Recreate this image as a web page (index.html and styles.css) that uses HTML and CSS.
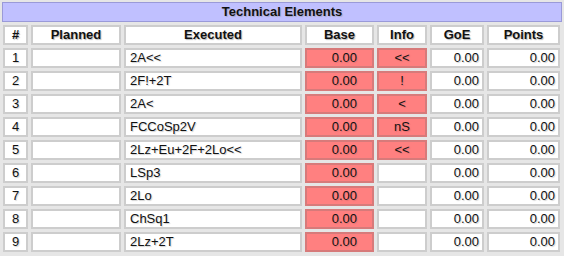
FILE: index.html
```html
<!DOCTYPE html>
<html>
<head>
<meta charset="utf-8">
<link rel="stylesheet" href="styles.css">
</head>
<body>
<div class="panel">
  <div class="title">Technical Elements</div>
  <div class="grid">
    <div class="cell head">#</div>
    <div class="cell head">Planned</div>
    <div class="cell head">Executed</div>
    <div class="cell head">Base</div>
    <div class="cell head">Info</div>
    <div class="cell head">GoE</div>
    <div class="cell head">Points</div>

    <div class="cell c">1</div><div class="cell"></div><div class="cell l">2A&lt;&lt;</div><div class="cell base red">0.00</div><div class="cell c red">&lt;&lt;</div><div class="cell r">0.00</div><div class="cell r">0.00</div>
    <div class="cell c">2</div><div class="cell"></div><div class="cell l">2F!+2T</div><div class="cell base red">0.00</div><div class="cell c red">!</div><div class="cell r">0.00</div><div class="cell r">0.00</div>
    <div class="cell c">3</div><div class="cell"></div><div class="cell l">2A&lt;</div><div class="cell base red">0.00</div><div class="cell c red">&lt;</div><div class="cell r">0.00</div><div class="cell r">0.00</div>
    <div class="cell c">4</div><div class="cell"></div><div class="cell l">FCCoSp2V</div><div class="cell base red">0.00</div><div class="cell c red">nS</div><div class="cell r">0.00</div><div class="cell r">0.00</div>
    <div class="cell c">5</div><div class="cell"></div><div class="cell l">2Lz+Eu+2F+2Lo&lt;&lt;</div><div class="cell base red">0.00</div><div class="cell c red">&lt;&lt;</div><div class="cell r">0.00</div><div class="cell r">0.00</div>
    <div class="cell c">6</div><div class="cell"></div><div class="cell l">LSp3</div><div class="cell base red">0.00</div><div class="cell c"></div><div class="cell r">0.00</div><div class="cell r">0.00</div>
    <div class="cell c">7</div><div class="cell"></div><div class="cell l">2Lo</div><div class="cell base red">0.00</div><div class="cell c"></div><div class="cell r">0.00</div><div class="cell r">0.00</div>
    <div class="cell c">8</div><div class="cell"></div><div class="cell l">ChSq1</div><div class="cell base red">0.00</div><div class="cell c"></div><div class="cell r">0.00</div><div class="cell r">0.00</div>
    <div class="cell c">9</div><div class="cell"></div><div class="cell l">2Lz+2T</div><div class="cell base red">0.00</div><div class="cell c"></div><div class="cell r">0.00</div><div class="cell r">0.00</div>
  </div>
</div>
</body>
</html>
```
FILE: styles.css
```css
* { box-sizing: border-box; }
html, body {
  margin: 0;
  padding: 0;
  background: #e6e6e6;
  font-family: "Liberation Sans", Arial, sans-serif;
  font-size: 13px;
  color: #111;
}
.panel {
  width: 564px;
  height: 256px;
  padding-top: 2px;
}
.title {
  margin: 0 2px 0 2px;
  height: 20px;
  background: #c0c0ff;
  border: 1px solid #9a9ad8;
  text-align: center;
  font-weight: bold;
  line-height: 18px;
  text-shadow: 1px 1px 1px #a8a8c8;
}
.grid {
  display: grid;
  grid-template-columns: 25px 90px 178px 69px 50px 54px 73px;
  grid-auto-rows: 20px;
  gap: 3px;
  padding: 3px;
}
.cell {
  background: #fff;
  border: 2px solid #cdcdcd;
  line-height: 16px;
  white-space: nowrap;
  overflow: hidden;
  text-shadow: 1px 1px 1px #d0d0d0;
}
.head {
  font-weight: bold;
  text-align: center;
  text-shadow: 1px 1px 1px #b8b8b8;
}
.c { text-align: center; }
.l { text-align: left; padding-left: 4px; }
.r { text-align: right; padding-right: 3px; }
.base { text-align: right; padding-right: 15px; }
.red {
  background: #ff8080;
  border-color: #d77a7a;
  text-shadow: 1px 1px 1px #e07070;
}
```
